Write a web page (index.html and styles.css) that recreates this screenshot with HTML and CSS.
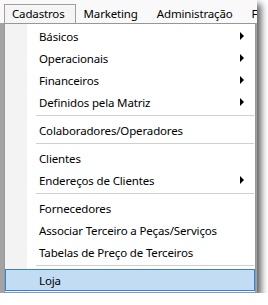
FILE: index.html
```html
<!DOCTYPE html>
<html lang="pt-BR">
<head>
    <meta charset="UTF-8">
    <title>Cadastros</title>
    <link rel="stylesheet" href="styles.css">
</head>
<body>
    <div class="shot">
        <div class="menubar">
            <span class="top-item open">Cadastros</span>
            <span class="top-item">Marketing</span>
            <span class="top-item">Administração</span>
            <span class="top-item">Financeiro</span>
        </div>
        <div class="desk">
            <div class="dropdown">
                <div class="item sub">Básicos</div>
                <div class="item sub">Operacionais</div>
                <div class="item sub">Financeiros</div>
                <div class="item sub">Definidos pela Matriz</div>
                <div class="sep"></div>
                <div class="item">Colaboradores/Operadores</div>
                <div class="sep"></div>
                <div class="item">Clientes</div>
                <div class="item sub">Endereços de Clientes</div>
                <div class="sep"></div>
                <div class="item">Fornecedores</div>
                <div class="item">Associar Terceiro a Peças/Serviços</div>
                <div class="item">Tabelas de Preço de Terceiros</div>
                <div class="sep"></div>
                <div class="item hot">Loja</div>
            </div>
        </div>
    </div>
</body>
</html>
```

FILE: styles.css
```css
body {
    margin: 0;
    background-color: #ffffff;
    font-family: "Noto Sans", "DejaVu Sans", sans-serif;
    font-size: 11.5px;
    letter-spacing: -0.15px;
    color: #000;
}
.shot {
    width: 257px;
    height: 293px;
    overflow: hidden;
    display: flex;
    flex-direction: column;
    box-shadow: 4px 4px 7px rgba(0, 0, 0, 0.65);
}
.menubar {
    height: 23px;
    box-sizing: border-box;
    padding: 4px 0 0 4px;
    background-color: #f9f9f9;
    display: flex;
    white-space: nowrap;
}
.top-item {
    height: 19px;
    line-height: 18px;
    box-sizing: border-box;
    padding: 0 10px 0 7px;
    border: 1px solid transparent;
    border-bottom: none;
}
.top-item.open {
    border-color: #a0a0a0;
    background-color: #f5f5f5;
}
.desk {
    flex: 1;
    display: flex;
    padding-left: 4px;
    background-color: #a3a3a3;
}
.dropdown {
    width: 252px;
    flex-shrink: 0;
    box-sizing: border-box;
    border: 1px solid #979797;
    padding: 1px 0;
    background: linear-gradient(to right, #f3f3f3 22px, #ffffff 22px);
    align-self: flex-start;
}
.item {
    position: relative;
    height: 22px;
    line-height: 21px;
    box-sizing: border-box;
    padding-left: 33px;
    border: 1px solid transparent;
    white-space: nowrap;
}
.item.sub::after {
    content: "";
    position: absolute;
    right: 10px;
    top: 6px;
    border-left: 4px solid #000;
    border-top: 4px solid transparent;
    border-bottom: 4px solid transparent;
}
.item.hot {
    background-color: #c1dcf3;
    border-color: #2e83dc;
}
.sep {
    height: 6px;
    margin-left: 31px;
    margin-right: 1px;
    background: linear-gradient(#d0d0d0, #d0d0d0) no-repeat 0 2px / 100% 1px;
}
```
